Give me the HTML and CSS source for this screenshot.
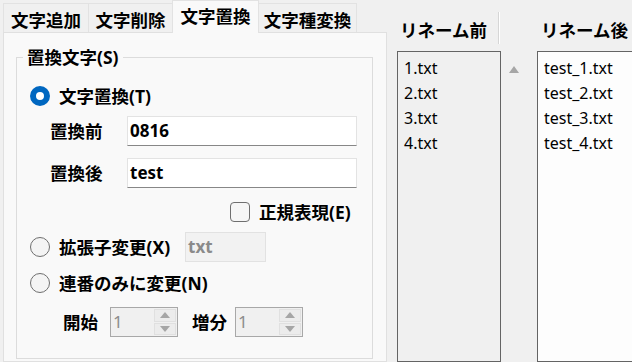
FILE: index.html
```html
<!DOCTYPE html>
<html lang="ja">
<head>
<meta charset="utf-8">
<title>リネーム</title>
<link rel="stylesheet" href="styles.css">
</head>
<body>
<div class="app">
  <div class="left">
    <div class="tabs">
      <div class="tab t1">文字追加</div>
      <div class="tab t2">文字削除</div>
      <div class="tab t3 active">文字置換</div>
      <div class="tab t4">文字種変換</div>
    </div>
    <div class="panel">
      <fieldset class="group">
        <legend>置換文字(S)</legend>
        <div class="row r1"><span class="radio checked"></span><span class="opt">文字置換(T)</span></div>
        <div class="row r2"><span class="flabel">置換前</span><div class="input">0816</div></div>
        <div class="row r3"><span class="flabel">置換後</span><div class="input">test</div></div>
        <div class="row r4"><span class="check"></span><span class="opt">正規表現(E)</span></div>
        <div class="row r5"><span class="radio"></span><span class="opt ext-label">拡張子変更(X)</span><div class="input disabled ext">txt</div></div>
        <div class="row r6"><span class="radio"></span><span class="opt">連番のみに変更(N)</span></div>
        <div class="row r7">
          <span class="slabel">開始</span>
          <div class="spin"><span class="val">1</span><span class="btns"><span class="btn"><span class="up"></span></span><span class="btn"><span class="down"></span></span></span></div>
          <span class="slabel s2">増分</span>
          <div class="spin"><span class="val">1</span><span class="btns"><span class="btn"><span class="up"></span></span><span class="btn"><span class="down"></span></span></span></div>
        </div>
      </fieldset>
    </div>
  </div>
  <div class="right">
    <div class="col c1">
      <div class="head"><span class="htext">リネーム前</span><span class="sep"></span></div>
      <div class="list l1">
        <div class="item">1.txt</div>
        <div class="item">2.txt</div>
        <div class="item">3.txt</div>
        <div class="item">4.txt</div>
      </div>
    </div>
    <div class="col mid">
      <div class="head"></div>
      <div class="tri"></div>
    </div>
    <div class="col c2">
      <div class="head"><span class="htext h2">リネーム後</span></div>
      <div class="list l2">
        <div class="item">test_1.txt</div>
        <div class="item">test_2.txt</div>
        <div class="item">test_3.txt</div>
        <div class="item">test_4.txt</div>
      </div>
    </div>
  </div>
</div>
</body>
</html>
```
FILE: styles.css
```css
* { box-sizing: border-box; }
html, body { margin: 0; padding: 0; }
body {
  width: 632px;
  height: 362px;
  overflow: hidden;
  background: #f0f0f0;
  font-family: "Noto Sans", "Noto Sans CJK JP", sans-serif;
  color: #000;
}
.app { display: flex; height: 362px; }

/* left tab area */
.left { width: 387px; padding-left: 3px; flex: none; display: flex; flex-direction: column; }
.tabs { display: flex; align-items: flex-end; height: 32px; position: relative; z-index: 2; }
.tab {
  height: 29px;
  margin-right: -1px;
  border: 1px solid #e2e2e2;
  border-bottom: none;
  background: #f0f0f0;
  font-weight: 700;
  font-size: 17.5px;
  line-height: 28px;
  padding-top: 2px;
  text-align: center;
  white-space: nowrap;
}
.t1 { width: 86px; }
.t2 { width: 85px; }
.t3 { width: 87px; }
.t4 { width: 99px; }
.tab.active {
  height: 33px;
  margin-bottom: -1px;
  background: #f9f9f9;
  padding-top: 1px;
  line-height: 28px;
  position: relative;
  z-index: 3;
}
.panel {
  flex: 1;
  border: 1px solid #e0e0e0;
  background: #f9f9f9;
  padding: 13px 13px 0 12px;
  overflow: hidden;
}
.group {
  margin: 0;
  padding: 0 15px 0 13px;
  border: 1px solid #dcdcdc;
  height: 313px;
  display: flex;
  flex-direction: column;
}
.group legend {
  font-weight: 700;
  font-size: 17.5px;
  line-height: 22px;
  padding: 0 4px;
  margin-left: -7px;
}
.row { display: flex; align-items: center; font-weight: 700; font-size: 17.5px; line-height: 22px; white-space: nowrap; }
.r1 { margin-top: 18px; height: 20px; }
.r2 { margin-top: 10px; height: 30px; }
.r3 { margin-top: 12px; height: 30px; }
.r4 { margin-top: 14px; height: 20px; padding-left: 200px; }
.r5 { margin-top: 10px; height: 30px; }
.r6 { margin-top: 11px; height: 20px; }
.r7 { margin-top: 14px; height: 30px; padding-left: 33px; }

.radio {
  width: 20px; height: 20px; flex: none;
  border-radius: 50%;
  border: 1px solid #6f6f6f;
  background: #f4f4f4;
}
.radio.checked { border: 6px solid #0067c0; background: #fff; }
.check {
  width: 20px; height: 20px; flex: none;
  border-radius: 4px;
  border: 1px solid #6f6f6f;
  background: #f6f6f6;
}
.opt { margin-left: 9px; }
.ext-label { width: 126px; }
.flabel { padding-left: 20px; width: 97px; }
.input {
  width: 230px;
  height: 30px;
  border: 1px solid #e3e3e3;
  border-bottom: 1px solid #878787;
  background: #fff;
  padding-left: 2px;
  line-height: 28px;
  font-size: 17px;
}
.input.disabled {
  width: 81px;
  background: #f2f2f2;
  border: 1px solid #e2e2e2;
  color: #8a8a8a;
  font-weight: 700;
}
.slabel { width: 47px; }
.slabel.s2 { width: 57px; padding-left: 14px; }
.spin {
  width: 68px; height: 30px;
  border: 1px solid #a8a8a8;
  background: #f0f0f0;
  display: flex;
}
.spin .val { flex: 1; color: #8c8c8c; font-weight: 400; font-size: 17px; line-height: 28px; padding-left: 2px; }
.spin .btns { width: 23px; display: flex; flex-direction: column; gap: 1px; padding: 1px 1px 1px 0; }
.spin .btn {
  flex: 1;
  background: #ececec;
  border: 1px solid #e0e0e0;
  display: flex; align-items: center; justify-content: center;
}
.up { width: 0; height: 0; border-left: 5px solid transparent; border-right: 5px solid transparent; border-bottom: 6px solid #a6a6a6; }
.down { width: 0; height: 0; border-left: 5px solid transparent; border-right: 5px solid transparent; border-top: 6px solid #a6a6a6; }

/* right: lists */
.right { flex: 1; display: flex; padding-left: 10px; overflow: hidden; }
.col { display: flex; flex-direction: column; flex: none; }
.c1 { width: 104px; }
.mid { width: 35px; }
.c2 { width: 140px; }
.head {
  height: 54px;
  display: flex;
  justify-content: space-between;
  font-weight: 700;
  font-size: 17.5px;
  line-height: 22px;
}
.htext { padding-top: 19px; padding-left: 3px; }
.htext.h2 { padding-left: 5px; }
.sep {
  width: 2px; height: 32px; margin-top: 12px; margin-right: 1px;
  border-left: 1px solid #d6d6d6;
  border-right: 1px solid #ffffff;
}
.list {
  height: 330px;
  border: 1px solid #646464;
  padding: 4px 0 0 6px;
  font-family: "Noto Sans", "Noto Sans CJK JP", sans-serif;
  font-size: 16px;
  line-height: 25px;
}
.l1 { background: #f0f0f0; }
.l2 { background: #fdfdfd; margin-left: 1px; }
.mid .head { height: 66px; }
.tri {
  width: 0; height: 0;
  margin-left: 8px;
  border-left: 5px solid transparent;
  border-right: 5px solid transparent;
  border-bottom: 7px solid #a6a6a6;
}
```
